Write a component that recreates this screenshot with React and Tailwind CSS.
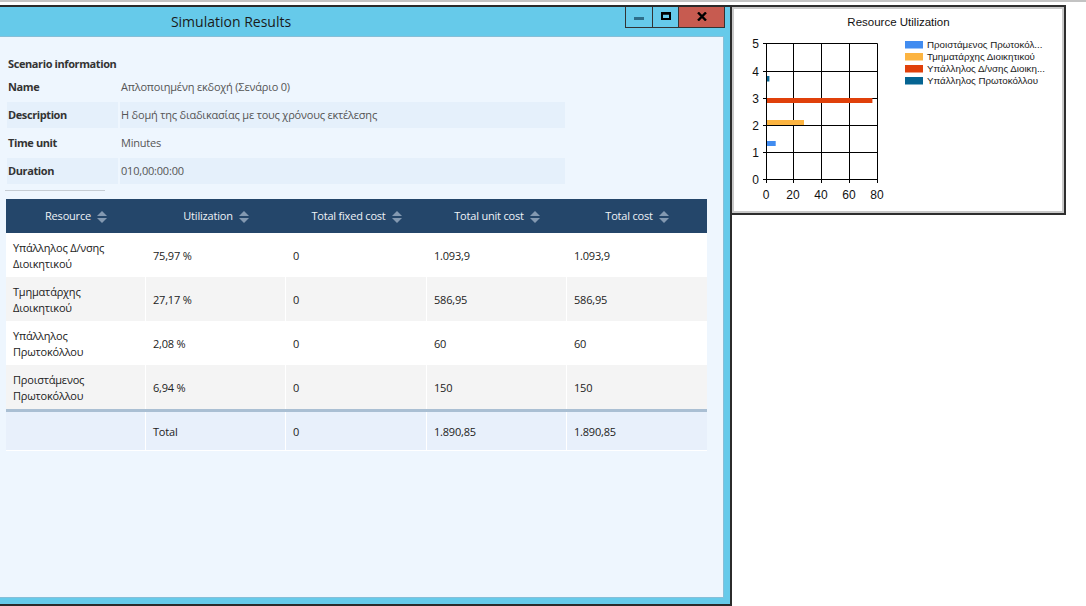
import React from "react";

const rows = [
  { name: ["Υπάλληλος Δ/νσης", "Διοικητικού"], util: "75,97 %", fixed: "0", unit: "1.093,9", total: "1.093,9" },
  { name: ["Τμηματάρχης", "Διοικητικού"], util: "27,17 %", fixed: "0", unit: "586,95", total: "586,95" },
  { name: ["Υπάλληλος", "Πρωτοκόλλου"], util: "2,08 %", fixed: "0", unit: "60", total: "60" },
  { name: ["Προιστάμενος", "Πρωτοκόλλου"], util: "6,94 %", fixed: "0", unit: "150", total: "150" },
];

const colW = ["w-[140px]", "w-[140px]", "w-[141px]", "w-[140px]", "w-[140px]"];

function SortIcon() {
  return (
    <svg width="10" height="12" viewBox="0 0 10 12" className="shrink-0">
      <polygon points="0,5 5,0 10,5" fill="#8399b1" />
      <polygon points="0,7 5,12 10,7" fill="#8399b1" />
    </svg>
  );
}

function Window() {
  const info = [
    { label: "Name", value: "Απλοποιημένη εκδοχή (Σενάριο 0)", bg: false },
    { label: "Description", value: "Η δομή της διαδικασίας με τους χρόνους εκτέλεσης", bg: true },
    { label: "Time unit", value: "Minutes", bg: false },
    { label: "Duration", value: "010,00:00:00", bg: true },
  ];
  const headers = ["Resource", "Utilization", "Total fixed cost", "Total unit cost", "Total cost"];
  return (
    <div className="w-[732px] h-[601px] shrink-0 border-t-2 border-r-2 border-b-2 border-[#2b2b2b] bg-[#66caea] flex flex-col">
      <div className="h-[29px] shrink-0 flex items-start">
        <div className="w-[462px] h-[29px] flex items-center justify-center text-[14px] text-[#1a1a1a]">
          Simulation Results
        </div>
        <div className="flex-1" />
        <div className="flex h-[21px] mr-[5px] border-l border-b border-r border-[#333]">
          <div className="w-[27px] h-full flex items-center justify-center border-r border-[#333]">
            <div className="w-[10px] h-[3px] bg-[#2e6e8a] mt-[3px]" />
          </div>
          <div className="w-[26px] h-full flex items-center justify-center border-r border-[#333]">
            <svg width="10" height="8" viewBox="0 0 10 8" className="mb-[2px]">
              <rect x="1" y="1.5" width="8" height="5.5" fill="none" stroke="#000" strokeWidth="2" />
              <rect x="0" y="0" width="10" height="2.5" fill="#000" />
            </svg>
          </div>
          <div className="w-[45px] h-full flex items-center justify-center bg-[#c75b50]">
            <svg width="10" height="9" viewBox="0 0 10 9" className="mb-[1px]">
              <path d="M1 0.5 L9 8.5 M9 0.5 L1 8.5" stroke="#000" strokeWidth="2.4" />
            </svg>
          </div>
        </div>
      </div>
      <div className="flex-1 mr-[6px] mb-[6px] bg-[#eef6fe] border-t border-r border-b border-[#86bfd8] pt-[17px] tracking-[-0.2px]">
        <div className="h-[20px] leading-[20px] pl-[8px] font-bold text-[11px] text-[#333] tracking-[-0.4px]">Scenario information</div>
        <div className="flex flex-col gap-[2px] ml-[7px]">
          {info.map((r) => (
            <div key={r.label} className="flex gap-[2px] h-[26px] text-[11px]">
              <div className={"w-[111px] pl-[1px] flex items-center font-bold text-[#333] tracking-[-0.4px] " + (r.bg ? "bg-[#e5f0fb]" : "")}>
                {r.label}
              </div>
              <div className={"w-[445px] pl-[1px] flex items-center text-[#555] " + (r.bg ? "bg-[#e5f0fb]" : "")}>
                {r.value}
              </div>
            </div>
          ))}
        </div>
        <div className="mt-[6px] ml-[5px] w-[100px] h-px bg-[#c5ccd3]" />
        <div className="mt-[8px] ml-[6px] w-[701px] text-[11px]">
          <div className="flex h-[34px] bg-[#24466a]">
            {headers.map((h, i) => (
              <div key={h} className={colW[i] + " flex items-center justify-center gap-[6px] pt-[1px] text-[#eef2f7]"}>
                <span>{h}</span>
                <SortIcon />
              </div>
            ))}
          </div>
          {rows.map((r, idx) => {
            const cells = [r.name, r.util, r.fixed, r.unit, r.total];
            return (
              <div key={idx} className={"flex h-[44px] " + (idx % 2 === 1 ? "bg-[#f4f4f4]" : "bg-white")}>
                {cells.map((c, i) => (
                  <div
                    key={i}
                    className={colW[i] + " px-[7px] pt-[1px] flex flex-col justify-center leading-[16px] text-[#222] " + (i < 4 ? "border-r border-white" : "")}
                  >
                    {Array.isArray(c) ? (
                      <>
                        <span>{c[0]}</span>
                        <span>{c[1]}</span>
                      </>
                    ) : (
                      <span>{c}</span>
                    )}
                  </div>
                ))}
              </div>
            );
          })}
          <div className="h-[3px] bg-[#aabfd3]" />
          <div className="flex h-[39px] bg-[#e8f0fb] border-b border-white">
            {["", "Total", "0", "1.890,85", "1.890,85"].map((c, i) => (
              <div key={i} className={colW[i] + " px-[7px] pt-[2px] flex items-center text-[#222] " + (i < 4 ? "border-r border-white" : "")}>
                {c}
              </div>
            ))}
          </div>
        </div>
      </div>
    </div>
  );
}

function Chart() {
  const vx = [32.5, 59.5, 87.5, 115.5, 143.5];
  const hy = [170.5, 143.5, 116.5, 89.5, 62.5, 34.5];
  const legend = [
    { c: "#418cf0", t: "Προιστάμενος Πρωτοκόλ..." },
    { c: "#fcb441", t: "Τμηματάρχης Διοικητικού" },
    { c: "#e0400a", t: "Υπάλληλος Δ/νσης Διοικη..." },
    { c: "#056492", t: "Υπάλληλος Πρωτοκόλλου" },
  ];
  const f = "'Liberation Sans', Arial, sans-serif";
  return (
    <div className="w-[334px] h-[210px] shrink-0 border-t-2 border-r-2 border-b-2 border-[#2e2e2e] bg-white">
      <div className="h-full border-2 border-[#c9c9c9]">
        <svg width="328" height="202" viewBox="0 0 328 202" className="block">
          <text x="164.5" y="17" textAnchor="middle" fontSize="11.5" fontFamily={f} fill="#111">
            Resource Utilization
          </text>
          {vx.map((x) => (
            <line key={"v" + x} x1={x} y1={34.5} x2={x} y2={174} stroke="#000" strokeWidth="1" />
          ))}
          {hy.map((y) => (
            <line key={"h" + y} x1={29} y1={y} x2={143.5} y2={y} stroke="#000" strokeWidth="1" />
          ))}
          {hy.map((y, k) => (
            <text key={"yl" + k} x="25" y={y + 4.3} textAnchor="end" fontSize="12" fontFamily={f} fill="#111">
              {k}
            </text>
          ))}
          {vx.map((x, k) => (
            <text key={"xl" + k} x={x - 0.5} y="190" textAnchor="middle" fontSize="12" fontFamily={f} fill="#111">
              {k * 20}
            </text>
          ))}
          <rect x="33" y="67" width="2.4" height="5.5" fill="#056492" />
          <rect x="33" y="89" width="105.4" height="5" fill="#e0400a" />
          <rect x="33" y="111" width="37" height="5" fill="#fcb441" />
          <rect x="33" y="132" width="8.7" height="5" fill="#418cf0" />
          {legend.map((l, i) => (
            <g key={l.t}>
              <rect x="171" y={32 + i * 12} width="18" height="7.5" fill={l.c} />
              <text x="193" y={39 + i * 12} fontSize="9.75" fontFamily={f} fill="#1a1a1a">
                {l.t}
              </text>
            </g>
          ))}
        </svg>
      </div>
    </div>
  );
}

export default function App() {
  return (
    <div className="w-[1086px] h-[606px] bg-white overflow-hidden font-['Open_Sans','Noto_Sans',sans-serif]">
      <div className="h-[2px] bg-[#c3c3c3]" />
      <div className="h-[3px]" />
      <div className="flex items-start">
        <Window />
        <Chart />
      </div>
    </div>
  );
}
